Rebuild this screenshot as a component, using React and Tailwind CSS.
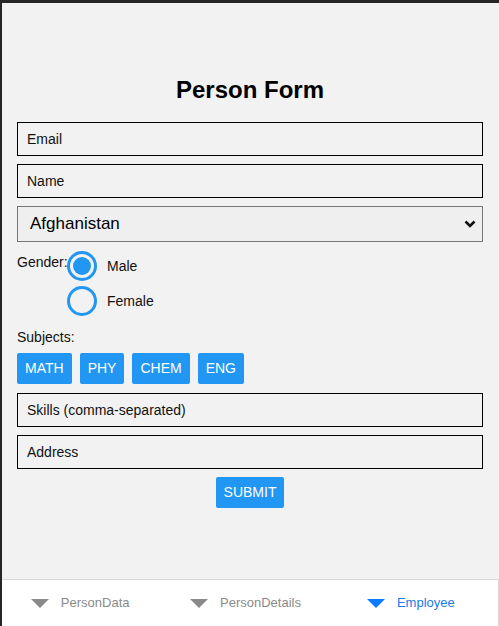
import React from "react";

function Radio({ checked, label }) {
  return (
    <label className="flex items-center h-[30px]">
      <span className="w-[30px] h-[30px] rounded-full border-[3px] border-[#2196f3] flex items-center justify-center bg-[#f2f2f2]">
        {checked && <span className="w-[18px] h-[18px] rounded-full bg-[#2196f3]" />}
      </span>
      <span className="ml-[10px] text-[14px] text-[#111]">{label}</span>
    </label>
  );
}

function Tab({ label, active }) {
  return (
    <div className="flex-1 flex items-center justify-center gap-[12px] pr-[9px]">
      <svg width="18" height="10" viewBox="0 0 18 10">
        <polygon points="0,1 18,1 9,10" fill={active ? "#0a7bff" : "#8a8a8a"} />
      </svg>
      <span className={active ? "text-[13px] text-[#1a7ae8]" : "text-[13px] text-[#8a8a8a]"}>{label}</span>
    </div>
  );
}

export default function App() {
  const inputCls =
    "block w-full h-[34px] border border-black bg-[#f2f2f2] px-[9px] text-[14px] text-[#111] placeholder:text-[#111] outline-none";
  return (
    <div
      className="w-[499px] h-[626px] bg-[#f2f2f2] border-t-[3px] border-l-2 border-[#262626] flex flex-col overflow-hidden"
      style={{ fontFamily: '"Liberation Sans", Arial, sans-serif' }}
    >
      <div className="flex-1 pl-[15px] pr-[16px]">
        <h1 className="mt-[73px] text-center text-[24px] leading-[28px] font-bold text-black">Person Form</h1>
        <div className="mt-[18px] flex flex-col gap-[8px]">
          <input className={inputCls} placeholder="Email" />
          <input className={inputCls} placeholder="Name" />
          <div className="h-[36px] border border-[#767676] bg-[#efefef] flex items-center justify-between pl-[12px] pr-[6px]">
            <span className="text-[17px] text-black">Afghanistan</span>
            <svg width="12" height="8" viewBox="0 0 12 8">
              <path d="M1.5 1.5 L6 6 L10.5 1.5" stroke="#111" strokeWidth="2.6" fill="none" />
            </svg>
          </div>
        </div>
        <div className="mt-[9px] flex">
          <span className="text-[14px] text-[#111] mt-[1px] w-[50px]">Gender:</span>
          <div className="flex flex-col gap-[5px]">
            <Radio checked label="Male" />
            <Radio label="Female" />
          </div>
        </div>
        <div className="mt-[13px] text-[14px] text-[#111] leading-[16px]">Subjects:</div>
        <div className="mt-[8px] flex gap-[8px]">
          {["MATH", "PHY", "CHEM", "ENG"].map((s) => (
            <button key={s} className="h-[31px] px-[8px] bg-[#2196f3] text-white text-[14px] rounded-[2px]">
              {s}
            </button>
          ))}
        </div>
        <div className="mt-[9px] flex flex-col gap-[8px]">
          <input className={inputCls} placeholder="Skills (comma-separated)" />
          <input className={inputCls} placeholder="Address" />
        </div>
        <div className="mt-[8px] flex justify-center">
          <button className="h-[31px] px-[8px] bg-[#2196f3] text-white text-[14px] rounded-[2px]">SUBMIT</button>
        </div>
      </div>
      <div className="h-[47px] bg-white border-t border-[#d8d8d8] border-r flex">
        <Tab label="PersonData" />
        <Tab label="PersonDetails" />
        <Tab label="Employee" active />
      </div>
    </div>
  );
}
